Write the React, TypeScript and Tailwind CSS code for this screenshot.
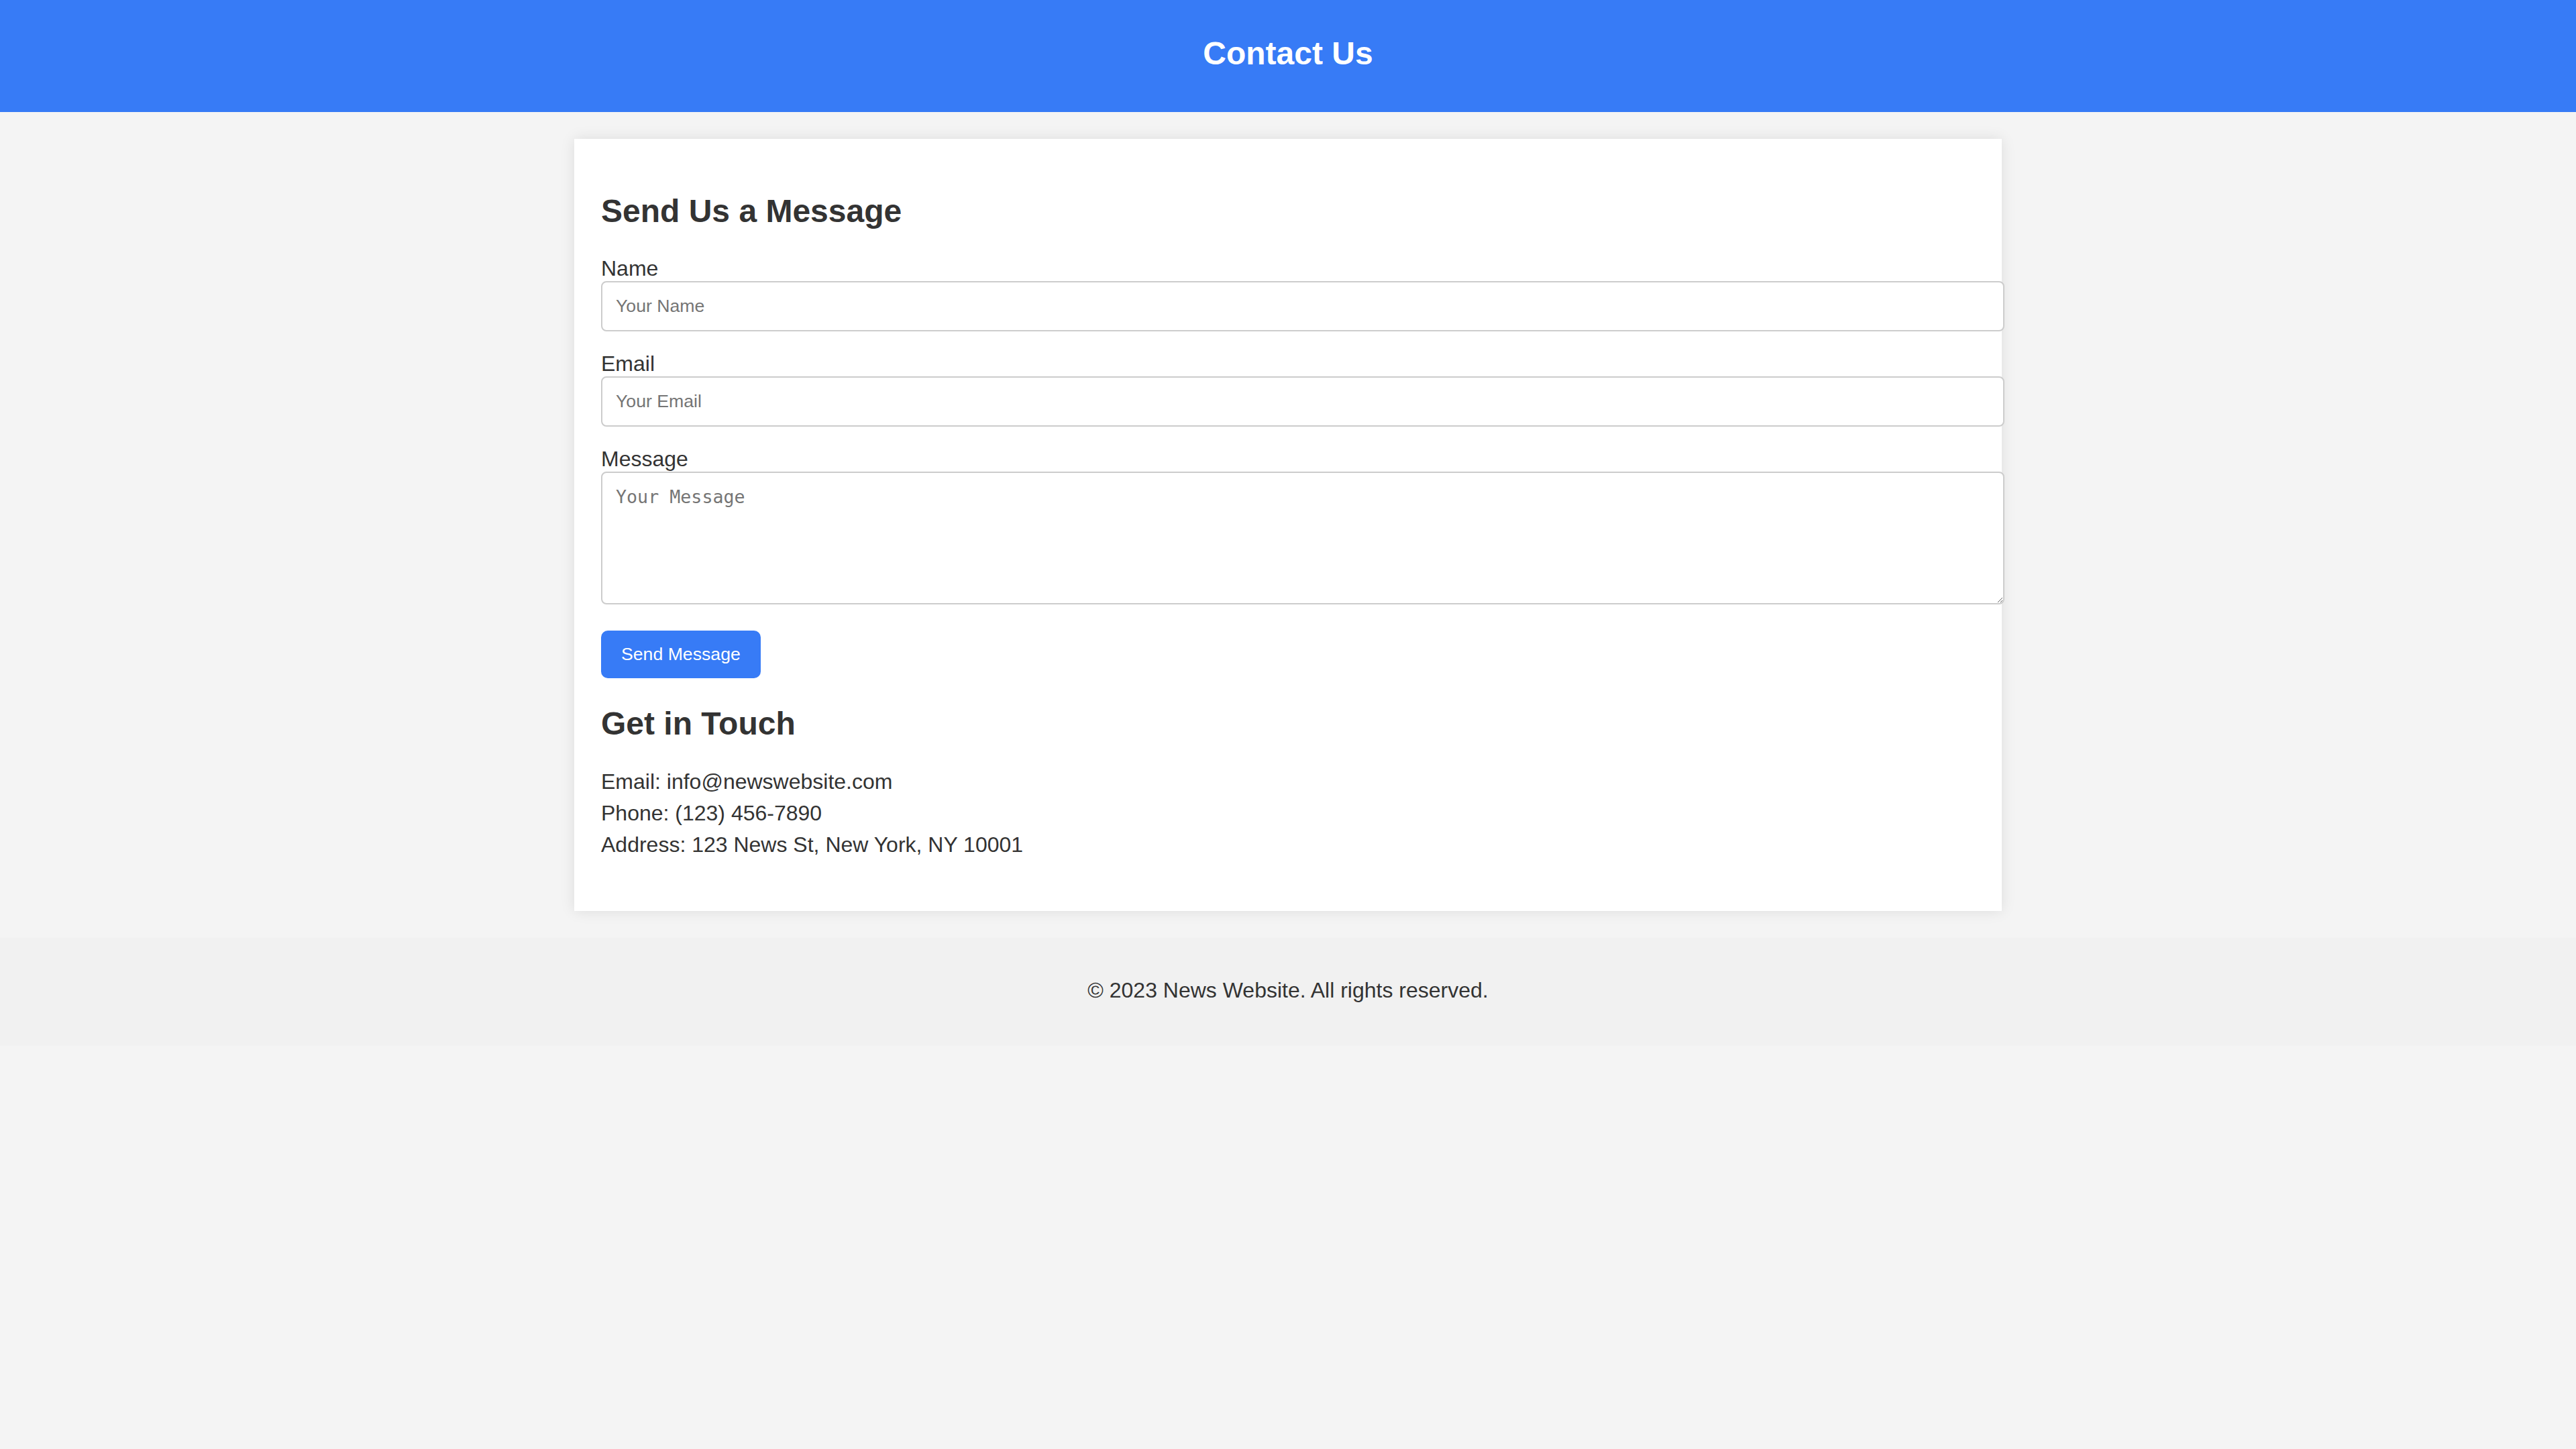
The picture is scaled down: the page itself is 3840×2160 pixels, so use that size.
import React from 'react'

const fields = [
  { id: 'name', label: 'Name', type: 'text', placeholder: 'Your Name' },
  { id: 'email', label: 'Email', type: 'email', placeholder: 'Your Email' },
]

const contactLines = [
  'Email: info@newswebsite.com',
  'Phone: (123) 456-7890',
  'Address: 123 News St, New York, NY 10001',
]

const App: React.FC = () => {
  return (
    <div className="min-h-screen bg-[#f4f4f4] font-['Liberation_Sans',Arial,sans-serif] text-[#333]">
      <header className="bg-[#377bf6] pt-[52px] pb-[60px] text-center">
        <h1 className="text-[48px] leading-[normal] font-bold text-white">Contact Us</h1>
      </header>

      <main className="mx-auto mt-[40px] w-[2128px] bg-white p-[40px] shadow-[0_0_20px_rgba(0,0,0,0.1)]">
        <h2 className="mt-[40px] mb-[40px] text-[48px] leading-[normal] font-bold">
          Send Us a Message
        </h2>

        <form onSubmit={(e) => e.preventDefault()}>
          {fields.map((field) => (
            <div key={field.id} className="mb-[30px]">
              <label htmlFor={field.id} className="block text-[32px] leading-[normal]">
                {field.label}
              </label>
              <input
                id={field.id}
                type={field.type}
                placeholder={field.placeholder}
                className="block w-[2092px] rounded-[8px] border-2 border-[#ccc] bg-white px-[20px] py-[20px] font-['Liberation_Sans',Arial,sans-serif] text-[26.67px] leading-[normal] text-[#333] outline-none placeholder:text-[#757575]"
              />
            </div>
          ))}

          <div className="mb-[39px]">
            <label htmlFor="message" className="block text-[32px] leading-[normal]">
              Message
            </label>
            <textarea
              id="message"
              placeholder="Your Message"
              className="block h-[198px] w-[2092px] rounded-[8px] border-2 border-[#ccc] bg-white px-[20px] py-[20px] font-['DejaVu_Sans_Mono',monospace] text-[26.67px] leading-[normal] text-[#333] outline-none placeholder:text-[#757575]"
            />
          </div>

          <div>
            <button
              type="submit"
              className="rounded-[10px] bg-[#377bf6] px-[30px] py-[20px] text-[26.67px] leading-[normal] text-white"
            >
              Send Message
            </button>
          </div>
        </form>

        <h2 className="mt-[40px] mb-[41px] text-[48px] leading-[normal] font-bold">Get in Touch</h2>
        <div className="mb-[40px] flex flex-col gap-[10px]">
          {contactLines.map((line) => (
            <p key={line} className="text-[32px] leading-[normal]">
              {line}
            </p>
          ))}
        </div>
      </main>

      <footer className="mt-[40px] bg-[#f1f1f1] pt-[60px] pb-[64px] text-center">
        <p className="text-[32px] leading-[normal]">© 2023 News Website. All rights reserved.</p>
      </footer>
    </div>
  )
}

export default App
